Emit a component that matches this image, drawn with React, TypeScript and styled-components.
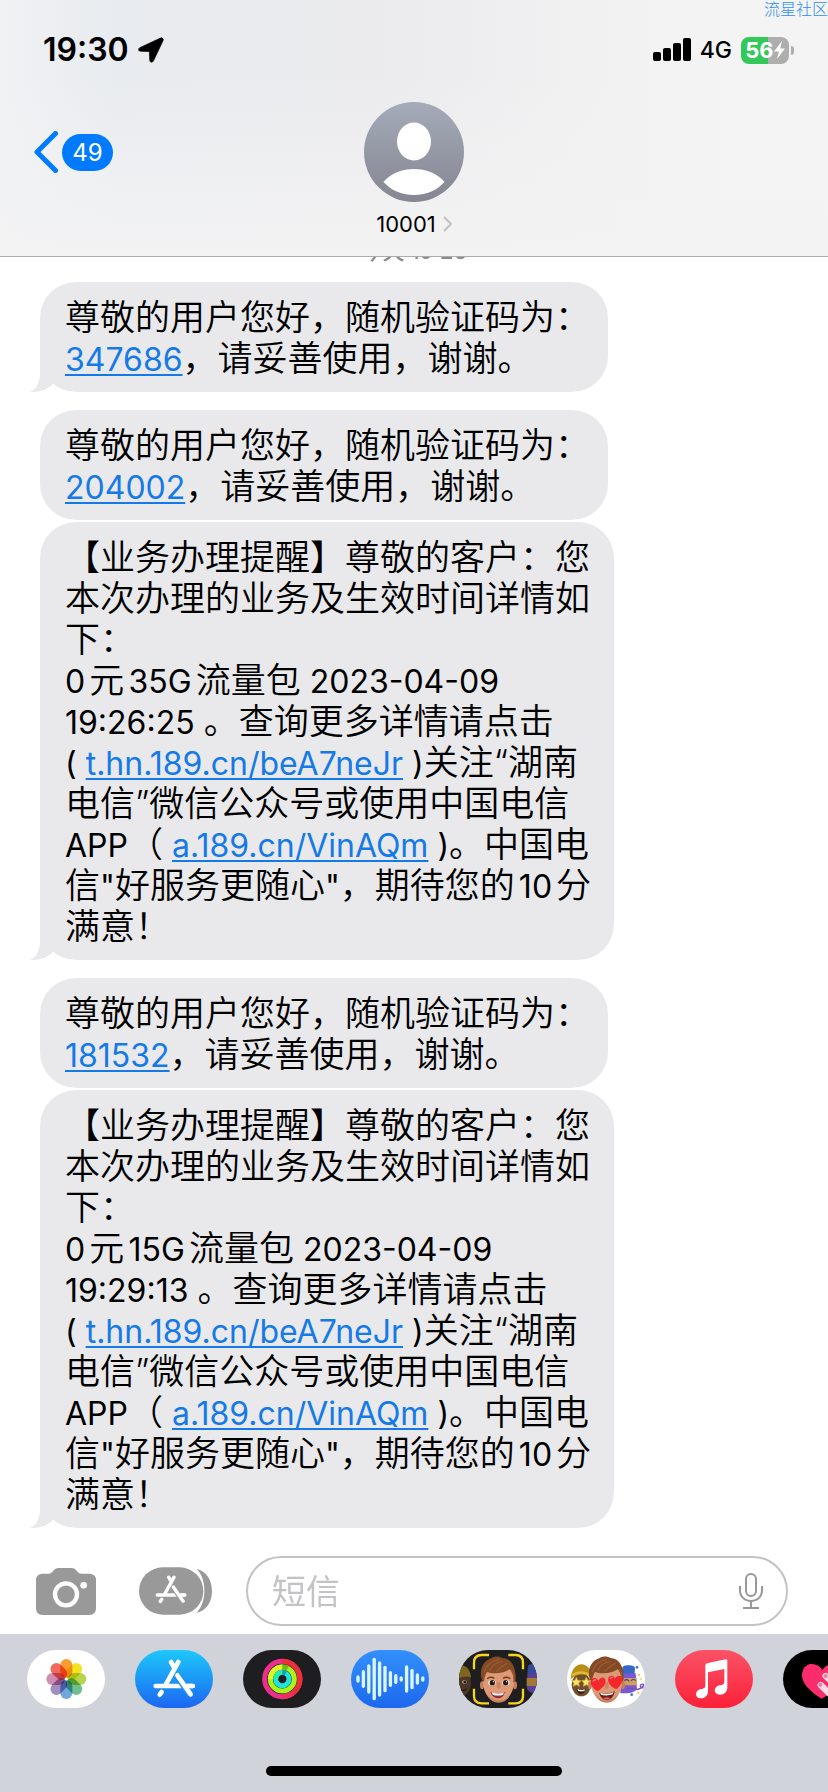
import React from "react";
import styled, { createGlobalStyle } from "styled-components";

const GlobalStyle = createGlobalStyle`
  * { box-sizing: border-box; }
  body {
    margin: 0;
    background: #fff;
    color: #000;
    font-family: Inter, "Noto Sans CJK SC", sans-serif;
  }
  button { border: 0; padding: 0; background: none; font: inherit; color: inherit; }
  svg { display: block; }
`;

/* ---------- page frame ---------- */

const Page = styled.div`
  position: relative;
  min-height: 100vh;
  display: flex;
  flex-direction: column;
  overflow: hidden;
`;

const Watermark = styled.span`
  position: absolute;
  z-index: 2;
  top: 0;
  right: 0;
  font: 300 16px/17px "Noto Sans CJK SC", sans-serif;
  color: #2f8df2;
  white-space: nowrap;
`;

const Header = styled.header`
  position: relative;
  z-index: 1;
  background: linear-gradient(to bottom, rgba(243, 243, 245, 0) 30%, #f3f3f4 100%),
    linear-gradient(to right, #f0f2f4 0%, #e8ebef 14%, #ebebed 45%, #f3f3f4 80%, #f4f4f5 100%);
  border-bottom: 1px solid #adadaf;
`;

const StatusBar = styled.div`
  height: 100px;
  display: flex;
  align-items: center;
  justify-content: space-between;
  padding: 0 34px 0 43px;
`;

const StatusGroup = styled.div`
  display: flex;
  align-items: center;
  gap: 9px;
`;

const Clock = styled.time`
  font-size: 32px;
  line-height: 40px;
  font-weight: 600;
`;

const Network = styled.span`
  font-size: 23px;
  line-height: 28px;
  font-weight: 500;
`;

const Battery = styled.span`
  display: flex;
  align-items: center;
  gap: 2px;
`;

const BatteryBody = styled.span<{ $level: number }>`
  display: flex;
  align-items: center;
  justify-content: center;
  width: 48px;
  height: 27px;
  border-radius: 8px;
  background: linear-gradient(to right, #34c759 ${(p) => p.$level}%, #aeaeae ${(p) => p.$level}%);
  color: #fff;
  font-size: 22px;
  line-height: 27px;
  font-weight: 700;
`;

const BatteryCap = styled.span`
  width: 3px;
  height: 9px;
  border-radius: 0 3px 3px 0;
  background: #aeaeae;
`;

const ContactBar = styled.div`
  display: grid;
  grid-template-columns: 1fr auto 1fr;
  padding: 2px 34px 18px;
`;

const BackButton = styled.button`
  justify-self: start;
  height: 100px;
  display: flex;
  align-items: center;
  gap: 4px;
`;

const UnreadBadge = styled.span`
  min-width: 51px;
  height: 37px;
  border-radius: 19px;
  background: #007aff;
  color: #fff;
  font-size: 24px;
  line-height: 37px;
  text-align: center;
`;

const ContactButton = styled.button`
  display: flex;
  flex-direction: column;
  align-items: center;
  gap: 8px;
`;

const ContactName = styled.span`
  display: flex;
  align-items: center;
  gap: 7px;
  font-size: 22px;
  line-height: 28px;
`;

/* ---------- conversation ---------- */

const Conversation = styled.main`
  flex: 1;
  display: flex;
  flex-direction: column;
  align-items: flex-start;
  padding: 0 40px 8px;
`;

const Stamp = styled.time`
  align-self: center;
  margin: -18px 0 19px;
  font-size: 22px;
  line-height: 24px;
  font-weight: 500;
  color: #8a8a8e;
`;

const Bubble = styled.article<{ $spaced?: boolean }>`
  position: relative;
  max-width: 574px;
  margin-bottom: ${(p) => (p.$spaced ? 18 : 2)}px;
  padding: 15px 18px 13px 25px;
  border-radius: 36px;
  background: #e9e9eb;
  font-size: 35px;
  line-height: 41px;
  font-weight: 350;
  text-autospace: normal;
`;

const BubbleText = styled.p`
  margin: 0;
`;

const TailSvg = styled.svg`
  position: absolute;
  left: -10px;
  bottom: 0;
`;

const Latin = styled.span`
  font-size: 32px;
  line-height: 32px;
  font-weight: 400;
`;

const Link = styled.a`
  font-size: 32px;
  line-height: 32px;
  font-weight: 400;
  color: #147ae8;
  text-decoration: underline;
  text-decoration-thickness: 2px;
  text-underline-offset: 3px;
`;

/* ---------- composer ---------- */

const Composer = styled.form`
  display: flex;
  align-items: center;
  padding: 0 40px 8px 36px;
`;

const ComposerButton = styled.button<{ $gap: number }>`
  flex: none;
  margin-right: ${(p) => p.$gap}px;
`;

const Field = styled.div`
  flex: 1;
  min-width: 0;
  height: 70px;
  display: flex;
  align-items: center;
  padding: 0 23px 0 24px;
  border: 2px solid #c3c3c5;
  border-radius: 35px;
`;

const FieldInput = styled.input`
  flex: 1;
  min-width: 0;
  border: 0;
  padding: 0;
  outline: 0;
  background: none;
  font: 400 34px/41px Inter, "Noto Sans CJK SC", sans-serif;
  &::placeholder {
    color: #c3c3c6;
    opacity: 1;
  }
`;

const Drawer = styled.footer`
  height: 158px;
  display: flex;
  flex-direction: column;
  justify-content: space-between;
  padding: 16px 0 16px 27px;
  background: #d0d3da;
`;

const AppRow = styled.nav`
  display: flex;
  gap: 30px;
  overflow: hidden;
`;

const AppButton = styled.button`
  flex: none;
  width: 78px;
  height: 58px;
  border-radius: 29px;
  overflow: hidden;
`;

const HomeIndicator = styled.div`
  align-self: center;
  width: 296px;
  height: 10px;
  margin-right: 27px;
  border-radius: 5px;
  background: #000;
`;

/* ---------- drawings ---------- */

const LocationIcon = () => (
  <svg width="26" height="26" viewBox="0 0 75 75">
    <path
      d="M72 5 Q70 1 65 3 L5 31 Q0 34 2 38 Q3 41 8 41 L31 42 Q33 42 33 45 L34 68 Q35 73 39 73 Q43 73 45 68 L72 11 Q74 7 72 5Z"
      fill="#000"
      stroke="#000"
      strokeWidth="2"
    />
  </svg>
);

const SignalIcon = () => (
  <svg width="38" height="24" viewBox="0 0 38 24">
    <rect x="0" y="14" width="8" height="9" rx="2" />
    <rect x="10" y="10" width="8" height="13" rx="2" />
    <rect x="20" y="5" width="8" height="18" rx="2" />
    <rect x="30" y="0" width="8" height="23" rx="2" />
  </svg>
);

const BoltIcon = () => (
  <svg width="11" height="18" viewBox="0 0 11 18">
    <path d="M8 0 L0 10.5 H5 L3 18 L11 7.5 H6.2 Z" fill="#fff" />
  </svg>
);

const BackIcon = () => (
  <svg width="24" height="42" viewBox="0 0 24 42">
    <path d="M21.500 2.500 L3 21 L21.500 39.500" fill="none" stroke="#007aff" strokeWidth="5" strokeLinecap="round" strokeLinejoin="round" />
  </svg>
);

const AvatarIcon = () => (
  <svg width="100" height="100" viewBox="0 0 100 100">
    <defs>
      <linearGradient id="avatar" x1="0" y1="0" x2="0" y2="1">
        <stop offset="0" stopColor="#a4abb9" />
        <stop offset="1" stopColor="#858691" />
      </linearGradient>
    </defs>
    <circle cx="50" cy="50" r="50" fill="url(#avatar)" />
    <ellipse cx="50" cy="39.500" rx="17" ry="19" fill="#fff" />
    <path d="M19.500 80 C27 71 38 67 50 67 C62 67 73 71 80.500 80 C73 88 63 93 50 93 C37 93 27 88 19.500 80Z" fill="#fff" />
  </svg>
);

const ChevronIcon = () => (
  <svg width="9" height="16" viewBox="0 0 9 16">
    <path d="M1 1 L8 8 L1 15" fill="none" stroke="#c0c0c3" strokeWidth="2" />
  </svg>
);

const Tail = () => (
  <TailSvg width="30" height="36" viewBox="0 0 30 36" aria-hidden="true">
    <path d="M10 0 V14 C10 25 8 33 0 36 C10 36.500 18 33 23 28 L30 22 V0Z" fill="#e9e9eb" />
  </TailSvg>
);

const CameraIcon = () => (
  <svg width="60" height="47" viewBox="0 0 180 141">
    <path
      d="M20 17 H38 Q45 17 49 12 L54 6 Q59 0 67 0 H107 Q115 0 120 6 L125 12 Q129 17 136 17 H160 Q180 17 180 37 V121 Q180 141 160 141 H20 Q0 141 0 121 V37 Q0 17 20 17Z"
      fill="#999"
    />
    <circle cx="90" cy="79" r="33" fill="none" stroke="#fff" strokeWidth="13" />
    <circle cx="143" cy="52" r="10" fill="#fff" />
  </svg>
);

const StoreStrokes = ({ gap }: { gap: string }) => (
  <g fill="none" strokeLinecap="round" strokeWidth="14" stroke="#fff">
    <path d="M62 108 H173" />
    <path d="M108 36 L115 48 M130 36 L91 106 M80 126 L74 134" />
    <path d="M127 76 L166 134" stroke={gap} strokeWidth="22" strokeLinecap="butt" />
    <path d="M127 76 L167 133 M156 108 H173" />
  </g>
);

const AppsIcon = () => (
  <svg width="73" height="48" viewBox="0 0 219 144">
    <path d="M173 6 C201 12 219 38 219 72 C219 106 201 132 173 137 C204 106 204 36 173 6Z" fill="#999" />
    <rect x="0" y="1" width="193" height="142" rx="71" fill="#999" />
    <g transform="translate(9 4) scale(.74)">
      <StoreStrokes gap="#999" />
    </g>
  </svg>
);

const MicIcon = () => (
  <svg width="24" height="36" viewBox="0 0 24 36" fill="none" stroke="#98989b" strokeWidth="2">
    <rect x="7" y="1" width="10" height="22" rx="5" />
    <path d="M1 13 V17 C1 24 6 28 12 28 C18 28 23 24 23 17 V13 M12 28 V34 M4 35 H20" />
  </svg>
);

const appArt = { width: 78, height: 58, viewBox: "0 0 234 174" };

const petals = ["#f8951d", "#f4df12", "#b1d040", "#63ba86", "#65a0dc", "#9a83bb", "#cd83aa", "#ef5c50"];

const PhotosArt = () => (
  <svg {...appArt}>
    <rect width="234" height="174" fill="#fff" />
    <g style={{ isolation: "isolate" }}>
      {petals.map((color, i) => (
        <rect
          key={color}
          x="100"
          y="27"
          width="36"
          height="56"
          rx="18"
          fill={color}
          fillOpacity=".92"
          transform={`rotate(${i * 45} 118 87)`}
          style={{ mixBlendMode: "multiply" }}
        />
      ))}
    </g>
  </svg>
);

const StoreArt = () => (
  <svg {...appArt}>
    <defs>
      <linearGradient id="store" x1="0" y1="0" x2="0" y2="1">
        <stop offset="0" stopColor="#1dc8fb" />
        <stop offset="1" stopColor="#1c66f1" />
      </linearGradient>
    </defs>
    <rect width="234" height="174" fill="url(#store)" />
    <StoreStrokes gap="#1c90f6" />
  </svg>
);

const FitnessArt = () => (
  <svg {...appArt}>
    <rect width="234" height="174" fill="#1e1d20" />
    <g fill="none" strokeWidth="15">
      <circle cx="118" cy="87" r="53" stroke="#ec2f8c" />
      <path d="M118 34 A53 53 0 0 1 150 129" stroke="#ee2f36" />
      <path d="M150 129 A53 53 0 0 1 118 140" stroke="#ee2f5e" />
      <circle cx="118" cy="87" r="36" stroke="#a8f51b" />
      <path d="M82 87 A36 36 0 0 1 118 51" stroke="#dff22a" />
      <path d="M118 51 A36 36 0 0 1 134 55" stroke="#6fb81c" />
      <circle cx="118" cy="87" r="20" stroke="#1fe3dc" />
      <path d="M98 87 A20 20 0 0 1 118 67" stroke="#22edaa" />
      <path d="M118 67 A20 20 0 0 1 128 70" stroke="#1b9fa6" />
    </g>
  </svg>
);

const wave = [22, 54, 88, 128, 106, 80, 48, 30, 16, 82, 62, 34, 16];

const AudioArt = () => (
  <svg {...appArt}>
    <defs>
      <linearGradient id="audio" x1="0" y1="0" x2="0" y2="1">
        <stop offset="0" stopColor="#3390fc" />
        <stop offset="1" stopColor="#1d68ee" />
      </linearGradient>
    </defs>
    <rect width="234" height="174" fill="url(#audio)" />
    {wave.map((h, i) => (
      <rect key={i} x={16 + i * 16.200} y={87 - h / 2} width="10" height={h} rx="5" fill="#d9f6ff" />
    ))}
  </svg>
);

const Face = ({ hearts }: { hearts?: boolean }) => (
  <g>
    <ellipse cx="69" cy="106" rx="6" ry="12" fill="#c77f5b" />
    <ellipse cx="168" cy="106" rx="6" ry="12" fill="#c77f5b" />
    <path d="M71 72 C70 110 76 128 90 144 C104 160 132 160 147 144 C161 128 167 110 166 72 C155 40 84 40 71 72Z" fill="#dd9a74" />
    <path d="M84 130 C96 158 142 158 154 130 C150 148 136 158 119 158 C102 158 88 148 84 130Z" fill="#c98260" />
    <path d="M68 88 C60 54 74 32 98 24 C106 18 122 18 130 24 C156 24 172 50 170 90 L163 98 C165 80 160 66 152 58 C134 72 100 72 84 66 C78 74 76 88 75 96Z" fill="#834a25" />
    <path d="M76 66 C82 42 98 32 120 28 M92 64 C100 44 112 38 130 34 M112 65 C122 54 134 44 146 40 M156 58 C162 66 165 76 165 84" stroke="#9c5c30" strokeWidth="4" fill="none" />
    <path d="M114 96 Q110 116 119 117 Q128 116 123 96" fill="#cd8662" />
    {hearts ? (
      <>
        <path d="M92 124 C74 114 66 98 74 88 C82 80 92 85 94 94 C98 82 112 78 115 90 C118 104 104 116 92 124Z" fill="#f5262c" />
        <path d="M148 118 C132 111 120 98 124 84 C128 74 142 76 144 86 C148 76 162 74 166 84 C168 98 158 110 148 118Z" fill="#f5262c" />
        <path d="M78 94 Q82 88 87 90 M129 86 Q134 80 138 83" stroke="#ff8983" strokeWidth="4" fill="none" />
        <path d="M96 128 Q118 136 144 124 Q138 150 118 150 Q102 148 96 128Z" fill="#6d1f1d" />
        <path d="M100 129 Q118 136 140 127 L137 133 Q118 139 102 134Z" fill="#fff" />
        <path d="M108 146 Q118 138 130 145 Q118 152 108 146Z" fill="#d8605f" />
      </>
    ) : (
      <>
        <path d="M84 86 Q95 78 106 85 M132 85 Q143 78 154 86" stroke="#6b3b20" strokeWidth="4" fill="none" />
        <ellipse cx="99" cy="98" rx="11" ry="8" fill="#fff" />
        <ellipse cx="141" cy="98" rx="11" ry="8" fill="#fff" />
        <circle cx="100" cy="98" r="8" fill="#2b1712" />
        <circle cx="140" cy="98" r="8" fill="#2b1712" />
        <circle cx="103" cy="95" r="2" fill="#fff" />
        <circle cx="143" cy="95" r="2" fill="#fff" />
        <path d="M94 126 Q118 134 138 126 Q132 146 116 145 Q100 143 94 126Z" fill="#8c2e36" />
        <path d="M98 127 Q118 134 135 127 L132 134 Q117 139 101 134Z" fill="#fff" />
      </>
    )}
  </g>
);

const MemojiCameraArt = () => (
  <svg {...appArt}>
    <rect width="234" height="174" fill="#1e1e20" />
    <ellipse cx="8" cy="100" rx="28" ry="37" fill="#4c3628" />
    <path d="M0 48 C20 40 36 60 36 84 C24 76 12 80 0 84Z" fill="#80651c" />
    <ellipse cx="16" cy="96" rx="7" ry="5" fill="#b8aca0" />
    <circle cx="17" cy="96" r="4" fill="#1c1410" />
    <path d="M4 120 Q16 124 22 116" stroke="#241812" strokeWidth="4" fill="none" />
    <path d="M207 50 Q206 44 218 42 H234 V72 H205Z" fill="#354b94" />
    <path d="M205 72 H234 V128 Q212 132 204 116Z" fill="#57409a" />
    <path d="M203 84 H234 V108 H203Z" fill="#a07935" />
    <Face />
    <path d="M45 58 V38 Q45 15 68 15 H90 M148 15 H170 Q192 15 192 38 V58 M192 116 V138 Q192 160 170 160 H148 M90 160 H68 Q45 160 45 138 V116" fill="none" stroke="#f8d41d" strokeWidth="7" />
  </svg>
);

const MemojiStickerArt = () => (
  <svg {...appArt}>
    <rect width="234" height="174" fill="#fff" />
    <ellipse cx="43" cy="104" rx="29" ry="35" fill="#71502f" />
    <path d="M11 88 C12 30 72 26 76 86 C60 68 28 70 11 88Z" fill="#b98f19" />
    <path d="M14 76 Q42 58 74 78" stroke="#e2b832" strokeWidth="7" fill="none" />
    <path d="M28 82 L32 91 L42 92 L35 99 L37 109 L28 104 L19 109 L21 99 L14 92 L24 91Z M58 82 L62 91 L72 92 L65 99 L67 109 L58 104 L49 109 L51 99 L44 92 L54 91Z" fill="#ffe46d" stroke="#e0ac28" strokeWidth="2" />
    <path d="M28 116 Q44 122 56 116 Q50 134 40 132 Q30 128 28 116Z" fill="#41170f" />
    <path d="M31 117 Q44 123 54 118 L52 123 Q42 126 33 122Z" fill="#fff" />
    <path d="M166 52 Q170 44 186 46 Q203 46 204 56 L202 74 H164Z" fill="#3567c7" />
    <path d="M162 70 H206 L210 118 Q198 130 180 130 H160Z" fill="#7a58cf" />
    <path d="M164 84 H209 V106 H164Z" fill="#cfa055" />
    <path d="M172 92 Q180 84 186 94 M192 92 Q200 84 206 92" stroke="#5b3fa9" strokeWidth="4" fill="none" />
    <path d="M178 116 C196 108 202 126 218 116 C234 110 232 98 222 104 C216 110 224 116 230 112" stroke="#7b4dbb" strokeWidth="4" fill="none" />
    <circle cx="210" cy="52" r="4" fill="#2f76e0" />
    <circle cx="216" cy="75" r="3" fill="#f2bd2a" />
    <circle cx="222" cy="87" r="3" fill="#f0d45a" />
    <circle cx="194" cy="134" r="4" fill="#2f76e0" />
    <circle cx="214" cy="129" r="3" fill="#f2bd2a" />
    <Face hearts />
  </svg>
);

const MusicArt = () => (
  <svg {...appArt}>
    <defs>
      <linearGradient id="music" x1="0" y1="0" x2="0" y2="1">
        <stop offset="0" stopColor="#fb5266" />
        <stop offset="1" stopColor="#fb2139" />
      </linearGradient>
    </defs>
    <rect width="234" height="174" fill="url(#music)" />
    <path
      d="M96 40 L152 28 Q157 27 157 32 V112 C157 127 147 134 136 134 C124 134 117 127 120 117 C123 108 131 106 140 105 Q148 104 148 97 V57 L99 67 V123 C99 138 89 145 78 145 C67 145 61 137 64 128 C67 119 75 117 83 116 Q91 115 91 108 V47 Q91 41 96 40Z"
      fill="#fff"
    />
  </svg>
);

const TouchArt = () => (
  <svg {...appArt}>
    <rect width="234" height="174" fill="#000" />
    <path d="M116 146 C72 118 48 90 60 60 C71 35 104 38 118 60 C132 36 166 36 177 60 C188 90 160 118 116 146Z" fill="#fb2c6b" />
    <g stroke="#f5dce6" strokeWidth="19" strokeLinecap="round">
      <path d="M113 105 L150 142" />
      <path d="M128 78 L172 118" />
    </g>
    <circle cx="112" cy="104" r="6" fill="#e77ca2" />
    <circle cx="128" cy="78" r="6" fill="#e77ca2" />
  </svg>
);

const apps = [
  { name: "照片", Art: PhotosArt },
  { name: "App Store", Art: StoreArt },
  { name: "健身", Art: FitnessArt },
  { name: "音频", Art: AudioArt },
  { name: "拟我表情", Art: MemojiCameraArt },
  { name: "拟我表情贴纸", Art: MemojiStickerArt },
  { name: "音乐", Art: MusicArt },
  { name: "Digital Touch", Art: TouchArt },
];

/* ---------- messages ---------- */

const CodeMessage = ({ code, tail }: { code: string; tail?: boolean }) => (
  <Bubble $spaced={tail}>
    <BubbleText>
      尊敬的用户您好，随机验证码为：
      <br />
      <Link href={`tel:${code}`}>{code}</Link>，请妥善使用，谢谢。
    </BubbleText>
    {tail && <Tail />}
  </Bubble>
);

const NoticeMessage = ({ data, time }: { data: string; time: string }) => (
  <Bubble $spaced>
    <BubbleText>
      【业务办理提醒】尊敬的客户：您本次办理的业务及生效时间详情如下：
      <br />
      <Latin>0</Latin>元<Latin>{data}</Latin>流量包<Latin> 2023-04-09</Latin>
      <br />
      <Latin>{time} </Latin>。查询更多详情请点击
      <br />
      <Latin>( </Latin>
      <Link href="http://t.hn.189.cn/beA7neJr">t.hn.189.cn/beA7neJr</Link>
      <Latin> )</Latin>关注“湖南
      <br />
      电信”微信公众号或使用中国电信
      <br />
      <Latin>APP</Latin>（<Latin> </Latin>
      <Link href="http://a.189.cn/VinAQm">a.189.cn/VinAQm</Link>
      <Latin> )</Latin>。中国电
      <br />
      信<Latin>"</Latin>好服务更随心<Latin>"</Latin>，期待您的<Latin>10</Latin>分
      <br />
      满意！
    </BubbleText>
    <Tail />
  </Bubble>
);

export default function App() {
  return (
    <Page>
      <GlobalStyle />
      <Watermark>流星社区</Watermark>
      <Header>
        <StatusBar>
          <StatusGroup>
            <Clock>19:30</Clock>
            <LocationIcon />
          </StatusGroup>
          <StatusGroup>
            <SignalIcon />
            <Network>4G</Network>
            <Battery>
              <BatteryBody $level={56}>
                56
                <BoltIcon />
              </BatteryBody>
              <BatteryCap />
            </Battery>
          </StatusGroup>
        </StatusBar>
        <ContactBar>
          <BackButton type="button" aria-label="返回">
            <BackIcon />
            <UnreadBadge>49</UnreadBadge>
          </BackButton>
          <ContactButton type="button">
            <AvatarIcon />
            <ContactName>
              10001
              <ChevronIcon />
            </ContactName>
          </ContactButton>
        </ContactBar>
      </Header>

      <Conversation>
        <Stamp>今天 19:26</Stamp>
        <CodeMessage code="347686" tail />
        <CodeMessage code="204002" />
        <NoticeMessage data="35G" time="19:26:25" />
        <CodeMessage code="181532" />
        <NoticeMessage data="15G" time="19:29:13" />
      </Conversation>

      <Composer onSubmit={(e) => e.preventDefault()}>
        <ComposerButton type="button" $gap={43} aria-label="相机">
          <CameraIcon />
        </ComposerButton>
        <ComposerButton type="button" $gap={34} aria-label="应用">
          <AppsIcon />
        </ComposerButton>
        <Field>
          <FieldInput type="text" placeholder="短信" aria-label="短信" />
          <button type="button" aria-label="听写">
            <MicIcon />
          </button>
        </Field>
      </Composer>

      <Drawer>
        <AppRow>
          {apps.map(({ name, Art }) => (
            <AppButton key={name} type="button" aria-label={name}>
              <Art />
            </AppButton>
          ))}
        </AppRow>
        <HomeIndicator />
      </Drawer>
    </Page>
  );
}
